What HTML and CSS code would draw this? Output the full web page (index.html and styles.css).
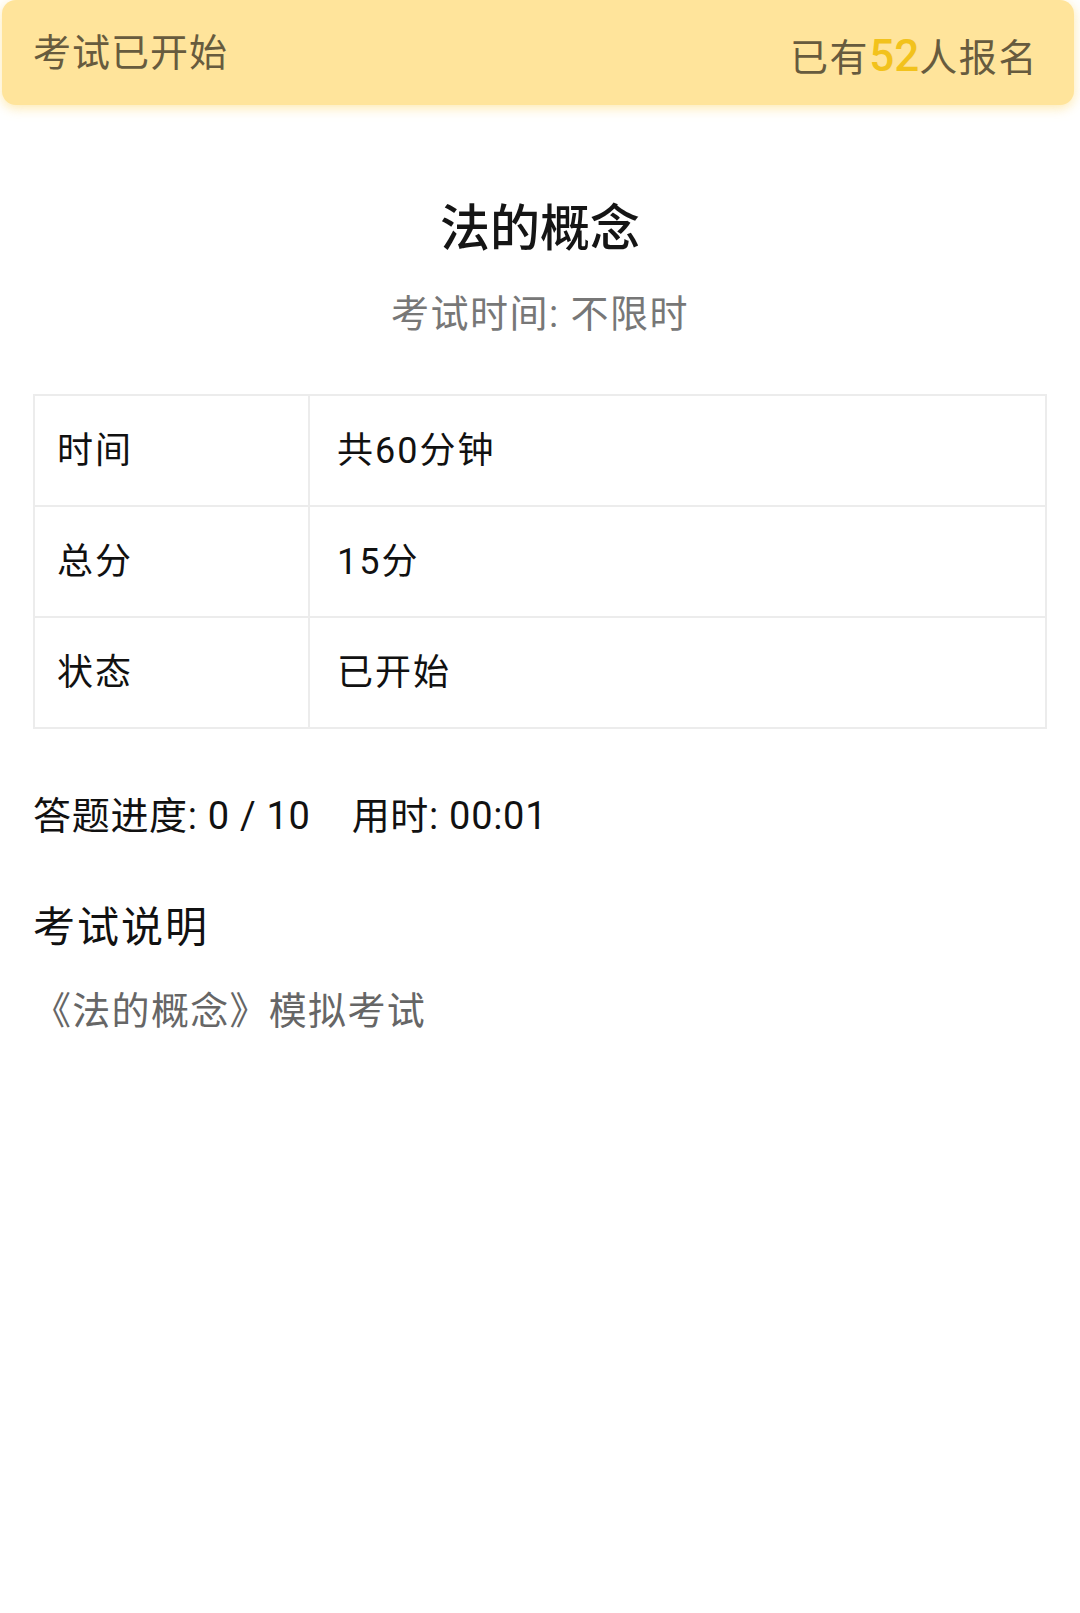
FILE: index.html
```html
<!DOCTYPE html>
<html lang="zh-CN">
<head>
<meta charset="utf-8">
<title>法的概念</title>
<link rel="stylesheet" href="styles.css">
</head>
<body>
<header class="topbar">
  <span class="status">考试已开始</span>
  <span class="enroll">已有<em class="count">52</em>人报名</span>
</header>
<main class="page">
  <h1 class="title">法的概念</h1>
  <p class="subtitle">考试时间: 不限时</p>
  <div class="info">
    <div class="cell label">时间</div>
    <div class="cell value">共60分钟</div>
    <div class="cell label">总分</div>
    <div class="cell value">15分</div>
    <div class="cell label">状态</div>
    <div class="cell value">已开始</div>
  </div>
  <div class="progress">
    <span>答题进度: 0 / 10</span>
    <span>用时: 00:01</span>
  </div>
  <h2 class="section-title">考试说明</h2>
  <p class="desc">《法的概念》模拟考试</p>
</main>
</body>
</html>
```

FILE: styles.css
```css
* { box-sizing: border-box; }
html, body {
  margin: 0;
  padding: 0;
  background: #ffffff;
}
body {
  font-family: Roboto, "Noto Sans CJK SC", sans-serif;
  color: #111111;
  line-height: 1;
  width: 1080px;
  min-height: 1613px;
}

.topbar {
  display: flex;
  justify-content: space-between;
  align-items: center;
  height: 105px;
  margin: 0 6px 0 2px;
  padding: 0 36px 0 31px;
  background: #ffe49b;
  border-radius: 14px;
  box-shadow: 0 3px 12px rgba(253, 218, 120, 0.6);
  color: #675b3e;
}
.status {
  font-size: 38px;
  letter-spacing: 1px;
}
.enroll {
  font-size: 38px;
  letter-spacing: 1.6px;
  margin-top: 6px;
}
.count {
  font-style: normal;
  font-weight: 500;
  font-size: 44px;
  letter-spacing: 0;
  color: #f2c21c;
}

.page {
  padding: 0 33px;
}
.title {
  margin: 99px 0 0;
  font-size: 50px;
  font-weight: 500;
  text-align: center;
  color: #151515;
}
.subtitle {
  margin: 41px 0 0;
  font-size: 38px;
  letter-spacing: 1.5px;
  text-align: center;
  color: #777777;
}

.info {
  margin-top: 61px;
  display: grid;
  grid-template-columns: 273px 1fr;
  gap: 2px;
  background: #ececec;
  border: 2px solid #ececec;
}
.cell {
  background: #ffffff;
  height: 109px;
  display: flex;
  align-items: center;
  font-size: 36px;
  letter-spacing: 2px;
  color: #111111;
}
.label { padding-left: 22px; }
.value { padding-left: 27px; }

.progress {
  margin-top: 68px;
  display: flex;
  gap: 41px;
  font-size: 38px;
  letter-spacing: 0.7px;
  color: #111111;
}

.section-title {
  margin: 72px 0 0;
  font-size: 42px;
  font-weight: 400;
  letter-spacing: 2px;
  color: #111111;
}
.desc {
  margin: 43px 0 0;
  font-size: 38px;
  letter-spacing: 1.3px;
  color: #666666;
}
```
